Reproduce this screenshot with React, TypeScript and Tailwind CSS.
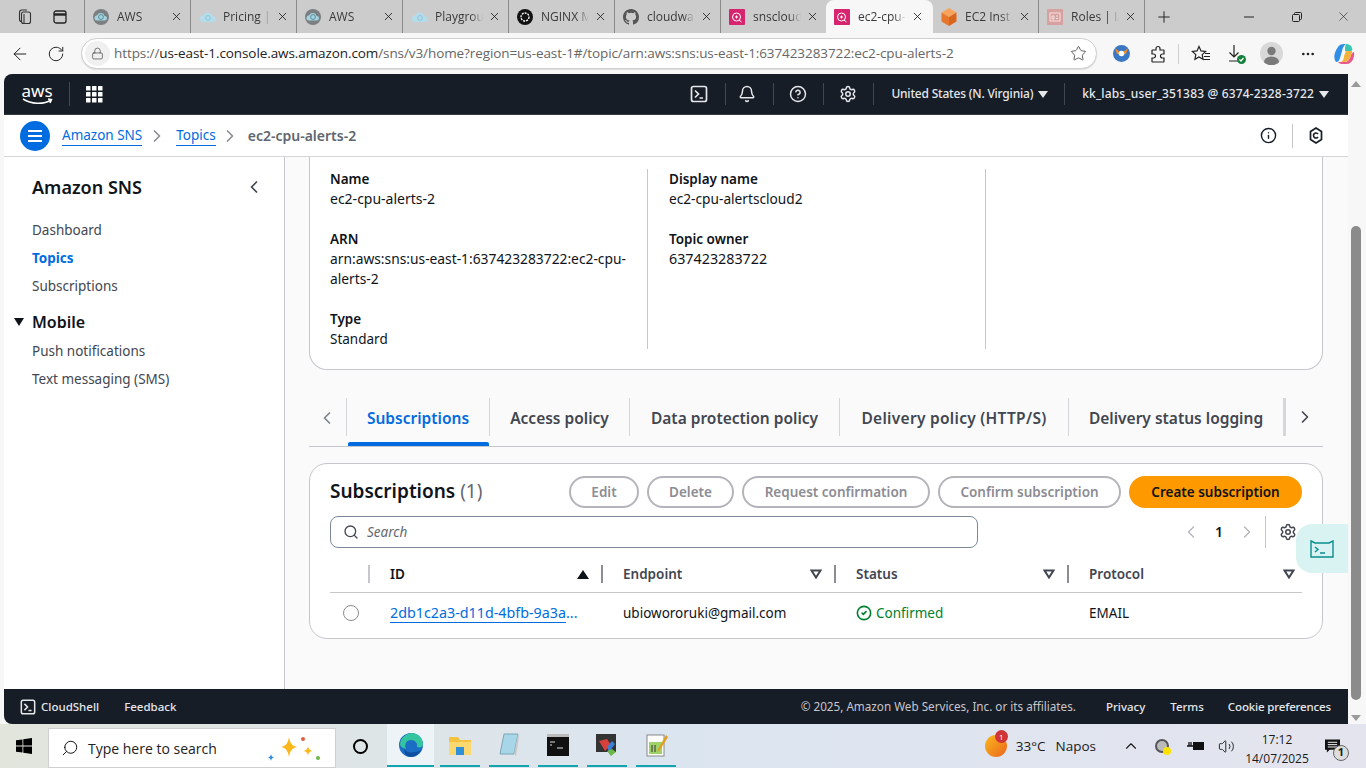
import React from 'react';
import {
  ArrowLeft,
  Bell,
  ChevronLeft,
  ChevronRight,
  ChevronUp,
  CircleCheck,
  CircleHelp,
  Info,
  Lock,
  MoreHorizontal,
  Plus,
  RotateCw,
  Search,
  Settings,
  Star,
  Volume2,
  X,
} from 'lucide-react';

const sans = 'font-["Noto_Sans",sans-serif]';
const chrome = 'font-["Open_Sans",sans-serif]';

function CloudFav({ dark }: { dark?: boolean }) {
  return (
    <svg width="18" height="16" viewBox="0 0 18 16">
      {dark && <circle cx="8" cy="8" r="8" fill="#7b7f82" />}
      <path
        d={dark ? 'M4 11.5a2.6 2.6 0 0 1 .2-5.2 3.9 3.9 0 0 1 7.4.6 2.3 2.3 0 0 1 .2 4.6z' : 'M4 13a3.200 3.200 0 0 1 0-6.400 5 5 0 0 1 9.500.6 2.900 2.900 0 0 1 .5 5.800z'}
        fill={dark ? '#a5d3df' : '#b5dcea'}
      />
      <circle cx={dark ? 8 : 9} cy={dark ? 8 : 9} r="2.4" fill="none" stroke={dark ? '#5c8c99' : '#8cc5dc'} />
    </svg>
  );
}

function PinkFav() {
  return (
    <svg width="16" height="16" viewBox="0 0 16 16">
      <rect width="16" height="16" rx="1" fill="#d6246e" />
      <circle cx="7.5" cy="8" r="4" fill="none" stroke="#fff" />
      <path d="M6 8h3M7.5 6.5v3M10 11l2.5 2" stroke="#fff" />
    </svg>
  );
}

function RolesFav() {
  return (
    <svg width="16" height="16" viewBox="0 0 16 16" fill="none">
      <rect width="16" height="16" rx="1" fill="#d9a0a0" />
      <rect x="3" y="4" width="10" height="8" stroke="#f4e2e2" />
      <path d="M5 7h2v3H5zM9 7h2M9 9.500h2" stroke="#f4e2e2" />
    </svg>
  );
}

interface TabProps {
  icon: React.ReactNode;
  label: string;
  active?: boolean;
  width?: string;
  hideSep?: boolean;
}

function BrowserTab({ icon, label, active, width = 'w-[106px]', hideSep }: TabProps) {
  return (
    <div
      className={`flex h-[33px] items-center pl-[7px] ${width} ${
        active ? 'rounded-t-lg bg-[#f7f7f7]' : hideSep ? '' : 'border-l border-[#8a8a8a]'
      }`}
    >
      <span className="ml-[1px] flex w-[24px] shrink-0">{icon}</span>
      <span className="w-[48px] text-[12px] whitespace-nowrap text-[#3a3a3a] [mask-image:linear-gradient(to_right,black_75%,transparent)]">
        {label}
      </span>
      <X size={13} strokeWidth={1.6} className="ml-[5px] shrink-0 text-[#222]" />
    </div>
  );
}

function TabStrip() {
  return (
    <div className={`flex h-[33px] items-center bg-[#cccccc] ${chrome}`}>
      <div className="flex w-[84px] shrink-0 items-center pl-[16px]">
        <svg width="18" height="18" viewBox="0 0 18 18" fill="none" stroke="#333" strokeWidth="1.1">
          <rect x="5.5" y="4" width="9" height="11.5" rx="2" />
          <path d="M5.5 13.5A2 2 0 0 1 3.5 11.5V4.5A2.5 2.5 0 0 1 6 2h5" />
          <path d="M8 15.5V6" />
        </svg>
        <svg className="ml-[18px]" width="16" height="16" viewBox="0 0 16 16" fill="none" stroke="#222" strokeWidth="1.3">
          <rect x="2" y="2" width="12" height="12" rx="2" />
          <path d="M2 5.5h12" strokeWidth="2.4" />
        </svg>
      </div>
      <BrowserTab icon={<CloudFav dark />} label="AWS" />
      <BrowserTab icon={<CloudFav />} label="Pricing |" />
      <BrowserTab icon={<CloudFav dark />} label="AWS" />
      <BrowserTab icon={<CloudFav />} label="Playgrou" />
      <BrowserTab
        icon={
          <svg width="16" height="16" viewBox="0 0 16 16">
            <circle cx="8" cy="8" r="8" fill="#111" />
            <circle cx="8" cy="8" r="4" fill="none" stroke="#fff" strokeWidth="1.3" strokeDasharray="2 1" />
          </svg>
        }
        label="NGINX M"
      />
      <BrowserTab
        icon={
          <svg width="16" height="16" viewBox="0 0 16 16">
            <path
              fill="#555"
              d="M8 0C3.58 0 0 3.58 0 8c0 3.54 2.29 6.53 5.47 7.59.4.07.55-.17.55-.38 0-.19-.01-.82-.01-1.49-2.01.37-2.53-.49-2.69-.94-.09-.23-.48-.94-.82-1.13-.28-.15-.68-.52-.01-.53.63-.01 1.08.58 1.23.82.72 1.21 1.87.87 2.33.66.07-.52.28-.87.51-1.07-1.78-.2-3.64-.89-3.64-3.95 0-.87.31-1.59.82-2.15-.08-.2-.36-1.02.08-2.12 0 0 .67-.21 2.2.82a7.6 7.6 0 0 1 4 0c1.53-1.04 2.2-.82 2.2-.82.44 1.1.16 1.92.08 2.12.51.56.82 1.27.82 2.15 0 3.07-1.87 3.75-3.65 3.95.29.25.54.73.54 1.48 0 1.07-.01 1.93-.01 2.2 0 .21.15.46.55.38A8 8 0 0 0 16 8c0-4.42-3.58-8-8-8z"
            />
          </svg>
        }
        label="cloudwa"
      />
      <BrowserTab icon={<PinkFav />} label="snscloud" />
      <BrowserTab icon={<PinkFav />} label="ec2-cpu-" active hideSep width="w-[107px]" />
      <BrowserTab
        hideSep
        width="w-[105px]"
        icon={
          <svg width="16" height="18" viewBox="0 0 16 18">
            <path d="M8 0l7.5 4.5L8 9 .5 4.5z" fill="#f7a35c" />
            <path d="M.5 4.5L8 9v9L.5 13.5z" fill="#e8772e" />
            <path d="M15.5 4.5L8 9v9l7.5-4.5z" fill="#d9661f" />
          </svg>
        }
        label="EC2 Inst"
      />
      <BrowserTab icon={<RolesFav />} label="Roles | IA" />
      <div className="flex h-[33px] w-[221px] items-center border-l border-[#8a8a8a] pl-[10px]">
        <Plus size={18} strokeWidth={1.3} className="text-[#222]" />
        <svg className="ml-[70px]" width="12" height="12" viewBox="0 0 12 12" stroke="#222">
          <path d="M1 6h10" />
        </svg>
        <svg className="ml-[36px]" width="12" height="12" viewBox="0 0 12 12" fill="none" stroke="#222">
          <rect x="1.5" y="3.5" width="7" height="7" rx="1" />
          <path d="M3.5 3.5V2.5a1 1 0 0 1 1-1h5a1 1 0 0 1 1 1v5a1 1 0 0 1-1 1h-1" />
        </svg>
        <X size={15} strokeWidth={1} className="ml-[33px] text-[#222]" />
      </div>
    </div>
  );
}

function AddressBar() {
  return (
    <div className={`flex h-[41px] items-center bg-[#f7f7f7] pl-[10px] ${chrome}`}>
      <ArrowLeft size={20} strokeWidth={1.2} className="text-[#222]" />
      <RotateCw size={18} strokeWidth={1.3} className="ml-[17px] text-[#222]" />
      <div className="ml-[16px] flex h-[31px] w-[1016px] items-center rounded-full border border-[#cfcfcf] bg-white pl-[3px] shadow-[0_1px_1px_#ddd]">
        <span className="flex h-[25px] w-[25px] items-center justify-center rounded-full bg-[#f0f0f0]">
          <Lock size={13} strokeWidth={1.3} className="text-[#444]" />
        </span>
        <span className="ml-[4px] text-[13.5px] tracking-[-0.09px] whitespace-nowrap text-[#666]">
          https://<span className="text-[#222]">us-east-1.console.aws.amazon.com</span>
          /sns/v3/home?region=us-east-1#/topic/arn:aws:sns:us-east-1:637423283722:ec2-cpu-alerts-2
        </span>
        <Star size={17} strokeWidth={1.2} className="ml-auto mr-[9px] text-[#444]" />
      </div>
      <div className="ml-[16px] flex items-center">
        <svg width="17" height="17" viewBox="0 0 17 17">
          <circle cx="8.5" cy="8.5" r="8.5" fill="#3b78c4" />
          <path d="M2 3l6.5 5.5L15 3l-2 6H4z" fill="#f08a24" />
          <circle cx="8.5" cy="8.5" r="2.8" fill="#fff" />
        </svg>
        <svg className="ml-[19px]" width="18" height="18" viewBox="0 0 18 18" fill="none" stroke="#222" strokeWidth="1.2">
          <path d="M7 5V3.500a2 2 0 0 1 4 0V5h3.500a.5.5 0 0 1 .5.5V9h-1.500a2 2 0 0 0 0 4H15v3.500a.5.5 0 0 1-.5.5H3.500a.5.5 0 0 1-.5-.5V13h1.500a2 2 0 0 0 0-4H3V5.500a.5.5 0 0 1 .5-.5z" />
        </svg>
        <span className="ml-[11px] h-[20px] w-px bg-[#d0d0d0]" />
        <svg className="ml-[12px]" width="20" height="18" viewBox="0 0 20 18" fill="none" stroke="#222" strokeWidth="1.2">
          <path d="M8 1.5l2 4.4 4.6.5-3.4 3.2.9 4.7L8 11.9l-4.1 2.4.9-4.7L1.4 6.4 6 5.9z" />
          <path d="M14 8.5h5M13 11.5h6M12.5 14.5h6.5" />
        </svg>
        <svg className="relative ml-[16px]" width="20" height="22" viewBox="0 0 20 22" fill="none" stroke="#222" strokeWidth="1.2">
          <path d="M7 2v12M2.5 9.5L7 14l4.5-4.5M2 18h10" />
          <circle cx="14.5" cy="16.5" r="4.5" fill="#15803d" stroke="none" />
          <path d="M12.5 16.5l1.5 1.5 2.5-3" stroke="#fff" />
        </svg>
        <span className="ml-[13px] flex h-[23px] w-[23px] items-center justify-center overflow-hidden rounded-full bg-[#d8d8d8]">
          <svg width="23" height="23" viewBox="0 0 23 23">
            <circle cx="11.5" cy="9" r="4.2" fill="#7a7a7a" />
            <ellipse cx="11.5" cy="20" rx="7.5" ry="5.5" fill="#7a7a7a" />
          </svg>
        </span>
        <MoreHorizontal size={16} strokeWidth={2} className="ml-[17px] text-[#222]" />
        <svg className="ml-[17px]" width="22" height="22" viewBox="0 0 22 22">
          <path d="M5 4c1-2 3-3 6-3h2c-2 1-3 3-4 7l-2 7c-1 3-2 4-4 4-2-3-3-8 2-15z" fill="#2f8fe8" />
          <path d="M13 1c3 0 5 1 6 4 1 2 0 3-2 3h-5c0-3 0-5 1-7z" fill="#38c6b0" />
          <path d="M9 21c-2 0-3-1-4-2h7c3 0 5-3 6-7 1-2 2-3 3-3 1 5-2 12-7 12z" fill="#e9598d" />
          <path d="M19 9c-1 5-3 9-7 10H8c2-1 3-3 3-6l2-5h6z" fill="#f3b23a" />
        </svg>
      </div>
    </div>
  );
}

function TerminalIcon({ size = 18 }: { size?: number }) {
  return (
    <svg width={size} height={size} viewBox="0 0 18 18" fill="none" stroke="currentColor" strokeWidth="1.7">
      <rect x="1.5" y="1.5" width="15" height="15" rx="2" />
      <path d="M5 5.5L8.5 9 5 12.5M9.5 13H13" />
    </svg>
  );
}

function NavSep({ className }: { className: string }) {
  return <span className={`h-[22px] w-px shrink-0 bg-[#414750] ${className}`} />;
}

function NavCaret({ className }: { className: string }) {
  return <span className={`h-0 w-0 border-x-[5px] border-t-[7px] border-x-transparent border-t-[#e5e7eb] ${className}`} />;
}

function TopNav() {
  return (
    <div className="flex h-[41px] shrink-0 items-center rounded-tl-lg border-b border-[#333b47] bg-[#161d26] text-[#e5e7eb]">
      <div className="ml-[18px] flex w-[30px] flex-col items-center">
        <span className={`text-[17px] leading-[15px] text-white ${sans}`}>aws</span>
        <svg width="31" height="7" viewBox="0 0 31 7" fill="none" stroke="#fff" strokeWidth="1.5">
          <path d="M1 1c8 5 20 6 28 1M26 1l3.500 .5L28 5" />
        </svg>
      </div>
      <span className="ml-[17px] h-[24px] w-px bg-[#414750]" />
      <svg className="ml-[16px]" width="17" height="17" viewBox="0 0 17 17" fill="#fff">
        {[0, 6, 12].map((y) =>
          [0, 6, 12].map((x) => <rect key={`${x}-${y}`} x={x} y={y} width="4.500" height="4.500" rx="0.5" />),
        )}
      </svg>
      <div className="ml-auto flex items-center">
        <TerminalIcon />
        <NavSep className="ml-[17px] mr-[12px]" />
        <Bell size={18} strokeWidth={2} />
        <NavSep className="ml-[17px] mr-[15px]" />
        <CircleHelp size={18} strokeWidth={2} />
        <NavSep className="ml-[16px] mr-[15px]" />
        <Settings size={18} strokeWidth={2} />
        <NavSep className="ml-[16px] mr-[17px]" />
        <span className={`text-[12px] font-medium tracking-[-0.2px] whitespace-nowrap ${sans}`}>United States (N. Virginia)</span>
        <NavCaret className="ml-[5px]" />
        <NavSep className="ml-[16px] mr-[17px]" />
        <span className={`text-[12px] font-medium tracking-[0.16px] whitespace-nowrap ${sans}`}>kk_labs_user_351383 @ 6374-2328-3722</span>
        <NavCaret className="ml-[5px] mr-[19px]" />
      </div>
    </div>
  );
}

function Breadcrumbs() {
  return (
    <div className={`flex h-[42px] shrink-0 items-center border-b border-[#d5d5da] bg-white pl-[16px] ${sans}`}>
      <span className="flex h-[30px] w-[30px] flex-col items-center justify-center gap-[3px] rounded-full bg-[#006ce0]">
        <span className="h-[2px] w-[14px] bg-white" />
        <span className="h-[2px] w-[14px] bg-white" />
        <span className="h-[2px] w-[14px] bg-white" />
      </span>
      <span className="ml-[12px] mt-[1px] border-b border-[#006ce0] text-[13.5px] leading-[19px] text-[#006ce0]">Amazon SNS</span>
      <ChevronRight size={20} strokeWidth={2} className="ml-[5px] mr-[9px] text-[#8c8c94]" />
      <span className="mt-[1px] border-b border-[#006ce0] text-[13.5px] leading-[19px] text-[#006ce0]">Topics</span>
      <ChevronRight size={20} strokeWidth={2} className="ml-[4px] mr-[8px] text-[#8c8c94]" />
      <span className="text-[14px] font-semibold text-[#5f6670]">ec2-cpu-alerts-2</span>
      <div className="ml-auto flex items-center text-[#161d26]">
        <Info size={17} strokeWidth={2} />
        <span className="ml-[15px] h-[24px] w-px bg-[#c6c6cd]" />
        <svg className="ml-[16px] mr-[25px]" width="14" height="17" viewBox="0 0 14 17" fill="none" stroke="currentColor" strokeWidth="1.700">
          <path d="M7 1l5.500 3.500v8L7 16l-5.500-3.500v-8z" />
          <path d="M9 7a2.500 2.500 0 1 0 0 3" strokeWidth="1.600" />
        </svg>
      </div>
    </div>
  );
}

function Sidebar() {
  return (
    <div className={`w-[281px] shrink-0 border-r border-[#c6c6cd] bg-white pl-[28px] text-[13.5px] text-[#424650] ${sans}`}>
      <div className="mt-[17px] flex h-[26px] items-center pr-[20px]">
        <span className="text-[18px] font-semibold text-[#0f141a]">Amazon SNS</span>
        <ChevronLeft size={20} strokeWidth={2} className="ml-auto text-[#424650]" />
      </div>
      <div className="mt-[16px] leading-[28px]">
        <div>Dashboard</div>
        <div className="font-bold text-[#006ce0]">Topics</div>
        <div>Subscriptions</div>
      </div>
      <div className="relative mt-[8px] flex h-[28px] items-center text-[16px] font-semibold text-[#0f141a]">
        <span className="absolute left-[-18px] top-[10px] h-0 w-0 border-x-[5px] border-t-[8px] border-x-transparent border-t-[#0f141a]" />
        Mobile
      </div>
      <div className="mt-[1px] leading-[28px]">
        <div>Push notifications</div>
        <div>Text messaging (SMS)</div>
      </div>
    </div>
  );
}

function Field({
  label,
  children,
  valueSize = 'text-[14px]',
  className = '',
}: {
  label: string;
  children: React.ReactNode;
  valueSize?: string;
  className?: string;
}) {
  return (
    <div className={className}>
      <div className="text-[13.5px] font-semibold text-[#0f141a]">{label}</div>
      <div className={`text-[#0f141a] ${valueSize}`}>{children}</div>
    </div>
  );
}

function DetailsCard() {
  return (
    <div className="rounded-b-[18px] border-x border-b border-[#c6c6cd] bg-white px-[20px] pb-[20px] pt-[12px] leading-[20px]">
      <div className="grid h-[180px] grid-cols-[317px_338px_1fr]">
        <div className="pr-[20px]">
          <Field label="Name">ec2-cpu-alerts-2</Field>
          <Field label="ARN" valueSize="text-[13.8px]" className="mt-[20px]">
            arn:aws:sns:us-east-1:637423283722:ec2-cpu-alerts-2
          </Field>
          <Field label="Type" valueSize="text-[13.5px]" className="mt-[20px]">
            Standard
          </Field>
        </div>
        <div className="border-l border-[#c6c6cd] pl-[21px]">
          <Field label="Display name" valueSize="text-[13.7px]">
            ec2-cpu-alertscloud2
          </Field>
          <Field label="Topic owner" valueSize="text-[14.3px]" className="mt-[20px]">
            637423283722
          </Field>
        </div>
        <div className="border-l border-[#c6c6cd]" />
      </div>
    </div>
  );
}

function TabItem({ label, width, active, spacing = '' }: { label: string; width: string; active?: boolean; spacing?: string }) {
  return (
    <div className={`relative flex h-[49px] items-start ${width}`}>
      <span className="h-[38px] w-px shrink-0 bg-[#d5d5da]" />
      <span
        className={`flex h-[40px] flex-1 items-center justify-center pt-[1px] text-[15.5px] font-semibold whitespace-nowrap ${spacing} ${
          active ? 'text-[#006ce0]' : 'text-[#424650]'
        }`}
      >
        {label}
      </span>
      {active && <span className="absolute bottom-[1px] left-[2px] right-0 h-[4px] rounded-t-[2px] bg-[#006ce0]" />}
    </div>
  );
}

function TabRow() {
  return (
    <div className={`mt-[28px] flex h-[49px] items-start border-b border-[#c6c6cd] ${sans}`}>
      <div className="flex h-[40px] w-[37px] items-center pl-[8px] text-[#7d8088]">
        <ChevronLeft size={20} strokeWidth={2} />
      </div>
      <TabItem label="Subscriptions" width="w-[143px]" active />
      <TabItem label="Access policy" width="w-[140px]" />
      <TabItem label="Data protection policy" width="w-[210px]" />
      <TabItem label="Delivery policy (HTTP/S)" width="w-[229px]" spacing="tracking-[0.28px]" />
      <TabItem label="Delivery status logging" width="w-[215px]" />
      <div className="flex h-[38px] flex-1 items-center border-l-[3px] border-[#d5d5da] pl-[9px] text-[#424650]">
        <ChevronRight size={20} strokeWidth={2} />
      </div>
    </div>
  );
}

function GrayButton({ label, width }: { label: string; width: string }) {
  return (
    <span
      className={`flex h-[32px] items-center justify-center rounded-full border-2 border-[#b4b4bb] text-[13.5px] font-semibold text-[#8c8c94] ${width}`}
    >
      {label}
    </span>
  );
}

function SortHead({ label, first, last }: { label: string; first?: boolean; last?: boolean }) {
  return (
    <div className={`flex h-[18px] items-center border-l-2 pl-[20px] ${first ? 'border-[#c6c6cd]' : 'border-[#8c8c94]'}`}>
      <span className={`text-[13.5px] font-semibold ${first ? 'text-[#0f141a]' : 'text-[#424650]'}`}>{label}</span>
      {first ? (
        <span className="ml-auto mr-[12px] h-0 w-0 border-x-[6px] border-b-[9px] border-x-transparent border-b-[#0f141a]" />
      ) : (
        <svg className={`ml-auto ${last ? 'mr-[7px]' : 'mr-[12px]'}`} width="12" height="10" viewBox="0 0 12 10" fill="none" stroke="#424650" strokeWidth="2">
          <path d="M1.500 1.500h9L6 8.500z" />
        </svg>
      )}
    </div>
  );
}

const tableCols = 'grid grid-cols-[38px_233px_233px_233px_1fr]';

function SubscriptionsCard() {
  return (
    <div className={`mt-[16px] rounded-[18px] border border-[#c6c6cd] bg-white px-[20px] pb-[6px] pt-[12px] text-[#0f141a] ${sans}`}>
      <div className="flex h-[32px] items-center">
        <span className="pb-[2px] text-[19px] font-semibold">
          Subscriptions <span className="font-normal text-[#656871]">(1)</span>
        </span>
        <div className="ml-auto flex gap-[8px]">
          <GrayButton label="Edit" width="w-[70px]" />
          <GrayButton label="Delete" width="w-[87px]" />
          <GrayButton label="Request confirmation" width="w-[188px]" />
          <GrayButton label="Confirm subscription" width="w-[183px]" />
          <span className="flex h-[32px] w-[173px] items-center justify-center rounded-full bg-[#ff9900] text-[13.5px] font-semibold">
            Create subscription
          </span>
        </div>
      </div>
      <div className="mt-[8px] flex h-[32px] items-center">
        <div className="flex h-[32px] w-[648px] items-center rounded-lg border border-[#7d8998] pl-[12px]">
          <Search size={16} strokeWidth={2} className="text-[#424650]" />
          <span className="ml-[8px] text-[13.5px] text-[#656871] italic">Search</span>
        </div>
        <ChevronLeft size={20} strokeWidth={1.6} className="ml-[203px] text-[#b4b4bb]" />
        <span className="ml-[14px] w-[8px] pb-[1px] text-[14px] font-semibold">1</span>
        <ChevronRight size={20} strokeWidth={1.6} className="ml-[14px] text-[#b4b4bb]" />
        <span className="ml-[8px] h-[32px] w-px bg-[#c6c6cd]" />
        <Settings size={18} strokeWidth={2} className="ml-[13px] text-[#424650]" />
      </div>
      <div className={`mt-[17px] ${tableCols} items-center border-b border-[#c6c6cd] pb-[9px]`}>
        <div className="h-[18px]" />
        <SortHead label="ID" first />
        <SortHead label="Endpoint" />
        <SortHead label="Status" />
        <SortHead label="Protocol" last />
      </div>
      <div className={`${tableCols} h-[39px] items-center pt-[1px] text-[13.5px]`}>
        <span className="ml-[13px] h-[16px] w-[16px] rounded-full border border-[#8c8c94]" />
        <div className="pl-[22px] text-[14.3px] whitespace-nowrap">
          <span className="text-[#006ce0]">
            <span className="border-b border-[#006ce0]">2db1c2a3-d11d-4bfb-9a3a</span>...
          </span>
        </div>
        <div className="pl-[22px]">ubiowororuki@gmail.com</div>
        <div className="flex items-center pl-[22px] text-[#00802f]">
          <CircleCheck size={16} strokeWidth={2.4} className="mr-[4px]" />
          Confirmed
        </div>
        <div className="pl-[22px]">EMAIL</div>
      </div>
    </div>
  );
}

function PageFooter() {
  return (
    <div className={`flex h-[35px] shrink-0 items-center rounded-bl-lg bg-[#161d26] pl-[16px] pr-[17px] text-[11.5px] font-medium text-[#e5e7eb] ${sans}`}>
      <TerminalIcon size={16} />
      <span className="ml-[5px]">CloudShell</span>
      <span className="ml-[25px]">Feedback</span>
      <span className="ml-auto text-[11.7px] font-normal text-[#c6c6cd]">© 2025, Amazon Web Services, Inc. or its affiliates.</span>
      <span className="ml-[30px]">Privacy</span>
      <span className="ml-[25px]">Terms</span>
      <span className="ml-[24px] tracking-[-0.15px]">Cookie preferences</span>
    </div>
  );
}

function PageScrollbar() {
  return (
    <div className="flex w-[18px] shrink-0 flex-col items-center bg-[#f7f7f7] pr-[2px]">
      <span className="mt-[7px] h-0 w-0 border-x-[5px] border-b-[6px] border-x-transparent border-b-[#9a9a9a]" />
      <span className="mt-[139px] h-[474px] w-[10px] rounded-full bg-[#8b8b8b]" />
      <span className="mt-auto mb-[3px] h-0 w-0 border-x-[5px] border-t-[6px] border-x-transparent border-t-[#9a9a9a]" />
    </div>
  );
}

function UnderlinedIcon({ children, width = 'w-[40px]', active }: { children: React.ReactNode; width?: string; active?: boolean }) {
  return (
    <div className={`flex h-[44px] flex-col items-center ${width} ${active ? 'bg-[#eef3f7]' : ''}`}>
      <span className="flex flex-1 items-center justify-center">{children}</span>
      <span className="mb-[1px] h-[2px] w-full bg-[#12a5b0]" />
    </div>
  );
}

function Taskbar() {
  return (
    <div className={`flex h-[44px] items-center bg-gradient-to-r from-[#e2e5dc] via-[#dbe5f0] to-[#e4e4ee] ${chrome}`}>
      <svg className="ml-[16px]" width="16" height="16" viewBox="0 0 16 16" fill="#000">
        <path d="M0 2.300l6.500-.9v6.200H0zM7.300 1.300L16 0v7.600H7.300zM0 8.400h6.500v6.200L0 13.700zM7.300 8.400H16V16l-8.700-1.200z" />
      </svg>
      <div className="ml-[16px] flex h-[40px] w-[288px] items-center self-end border border-[#cfcfcf] bg-white pl-[12px]">
        <Search size={18} strokeWidth={1.3} className="-scale-x-100 text-[#111]" />
        <span className="ml-[9px] text-[14px] text-[#222]">Type here to search</span>
        <svg className="ml-auto mr-[10px]" width="62" height="32" viewBox="0 0 62 32">
          <path d="M26 5c1 6 3 9 8 10-5 1-7 4-8 10-1-6-3-9-8-10 5-1 7-4 8-10z" fill="#fbb81c" />
          <path d="M45 14c.5 3 1.500 4 4.500 5-3 .5-4 1.500-4.500 5-.5-3.500-1.500-4.500-4.500-5 3-1 4-2 4.500-5z" fill="#fbb81c" />
          <path d="M8 22c.3 2 1 3 3 3.500-2 .5-2.700 1.500-3 3.500-.3-2-1-3-3-3.500 2-.5 2.700-1.500 3-3.500z" fill="#2b8ee0" />
          <circle cx="40" cy="7" r="2" fill="#e0603a" />
          <circle cx="55" cy="26" r="2" fill="#6cb84a" />
        </svg>
      </div>
      <span className="ml-[17px] h-[15px] w-[15px] rounded-full border-[2.500px] border-black" />
      <div className="ml-[19px] flex items-center">
        <UnderlinedIcon width="w-[47px]" active>
          <svg width="24" height="24" viewBox="0 0 24 24">
            <circle cx="12" cy="12" r="12" fill="#1a6fc4" />
            <path d="M1 11C2 4 8 0 13 0c6 0 11 5 11 11 0 3-3 4-6 3 1-4-2-7-6-7-5 0-7 5-5 9-4-1-6-3-6-5z" fill="#34c4a0" />
            <path d="M12 24c-4 0-7-3-7-8 2 3 6 4 10 3 3 0 5-1 7-2-2 4-6 7-10 7z" fill="#0f4fa0" />
          </svg>
        </UnderlinedIcon>
        <span className="ml-[6px]">
          <UnderlinedIcon>
            <svg width="22" height="20" viewBox="0 0 22 20">
              <path d="M0 2h9l2 3h11v15H0z" fill="#f5c242" />
              <path d="M0 7h22v13H0z" fill="#fbd970" />
              <rect x="7" y="12" width="8" height="8" fill="#2f8fd8" />
            </svg>
          </UnderlinedIcon>
        </span>
        <span className="ml-[9px]">
          <UnderlinedIcon>
            <svg width="22" height="24" viewBox="0 0 22 24">
              <path d="M6 1h14l-4 20H2z" fill="#a6d6e8" stroke="#7aa8bb" />
              <path d="M16 21l4-20 1 3-3 19z" fill="#c8c8c8" />
            </svg>
          </UnderlinedIcon>
        </span>
        <span className="ml-[9px]">
          <UnderlinedIcon>
            <svg width="22" height="22" viewBox="0 0 22 22">
              <rect width="22" height="22" fill="#111" />
              <rect width="22" height="3" fill="#bbb" />
              <path d="M3 8h5M3 11h2M10 14h6" stroke="#ddd" />
            </svg>
          </UnderlinedIcon>
        </span>
        <span className="ml-[9px]">
          <UnderlinedIcon>
            <svg width="24" height="24" viewBox="0 0 24 24">
              <rect x="1" y="1" width="20" height="18" fill="#333" />
              <path d="M4 8l8-2 4 6-6 6z" fill="#d8413a" />
              <path d="M12 14l5-6 3 3-6 8z" fill="#3a7fd8" />
              <path d="M12 18l5-2 4 3-5 4z" fill="#6cb84a" />
            </svg>
          </UnderlinedIcon>
        </span>
        <span className="ml-[9px]">
          <UnderlinedIcon>
            <svg width="24" height="24" viewBox="0 0 24 24">
              <rect x="3" y="2" width="17" height="21" fill="#fff" stroke="#888" />
              <rect x="5" y="9" width="13" height="12" fill="#9fd36a" />
              <path d="M8 12v7M11 12v7" stroke="#333" />
              <path d="M22 2L14 16l-1 3 3-2 8-13z" fill="#e0a020" />
            </svg>
          </UnderlinedIcon>
        </span>
      </div>
      <div className="ml-auto flex items-center text-[#1a1a1a]">
        <span className="relative flex h-[22px] w-[22px] items-center">
          <span className="h-[22px] w-[22px] rounded-full bg-gradient-to-br from-[#fbb81c] to-[#e8641c]" />
          <span className="absolute right-[-1px] top-[-5px] flex h-[13px] w-[13px] items-center justify-center rounded-full bg-[#d13438] text-[8px] text-white">
            1
          </span>
        </span>
        <span className="ml-[9px] text-[13.5px] whitespace-nowrap">33°C</span>
        <span className="ml-[10px] text-[13.5px]">Napos</span>
        <ChevronUp size={18} strokeWidth={1.5} className="ml-[26px]" />
        <span className="relative ml-[15px] h-[14px] w-[14px] rounded-full border-[2px] border-[#555] bg-[#bbb]">
          <span className="absolute bottom-[-4px] right-[-4px] h-[8px] w-[8px] rounded-full bg-[#fde100]" />
        </span>
        <svg className="ml-[18px]" width="18" height="14" viewBox="0 0 18 14">
          <rect x="6" y="3" width="11" height="8" fill="#111" />
          <path d="M0 7h6M2 3v4M4 3v4" stroke="#111" strokeWidth="1.300" fill="none" />
        </svg>
        <Volume2 size={17} strokeWidth={1.3} className="ml-[13px]" />
        <div className="ml-[9px] w-[66px] pt-[5px] text-center text-[12px] leading-[19px]">
          <div>17:12</div>
          <div>14/07/2025</div>
        </div>
        <span className="relative ml-[15px] mr-[26px] flex w-[15px]">
          <svg width="16" height="15" viewBox="0 0 16 15">
            <path d="M0 0h16v11H5l-3 3v-3H0z" fill="#111" />
            <path d="M3 3h10M3 5.500h10M3 8h10" stroke="#fff" />
          </svg>
          <span className="absolute right-[-9px] top-[6px] flex h-[16px] w-[16px] items-center justify-center rounded-full border border-[#666] bg-[#ddd] text-[11px] font-bold">
            1
          </span>
        </span>
      </div>
    </div>
  );
}

function App() {
  return (
    <div className="flex h-[768px] w-[1366px] flex-col overflow-hidden bg-[#f7f7f7]">
      <TabStrip />
      <AddressBar />
      <div className="flex h-[650px]">
        <div className="relative ml-[4px] flex w-[1344px] flex-col bg-[#fafafa]">
          <TopNav />
          <Breadcrumbs />
          <div className="flex min-h-0 flex-1">
            <Sidebar />
            <div className="flex-1 pl-[24px] pr-[25px]">
              <div className={sans}>
                <DetailsCard />
              </div>
              <TabRow />
              <SubscriptionsCard />
            </div>
          </div>
          <PageFooter />
          <div className="absolute right-0 top-[450px] flex h-[49px] w-[52px] items-center justify-center rounded-l-2xl bg-[#d9f2f2] text-[#0a8f8f]">
            <svg width="24" height="18" viewBox="0 0 24 18" fill="none" stroke="currentColor" strokeWidth="1.400">
              <path d="M1 1l4 2h14l4-2v16H1z" />
              <path d="M5 7l3 2.500L5 12M10 13h5" />
            </svg>
          </div>
        </div>
        <PageScrollbar />
      </div>
      <Taskbar />
    </div>
  );
}

export default App;
